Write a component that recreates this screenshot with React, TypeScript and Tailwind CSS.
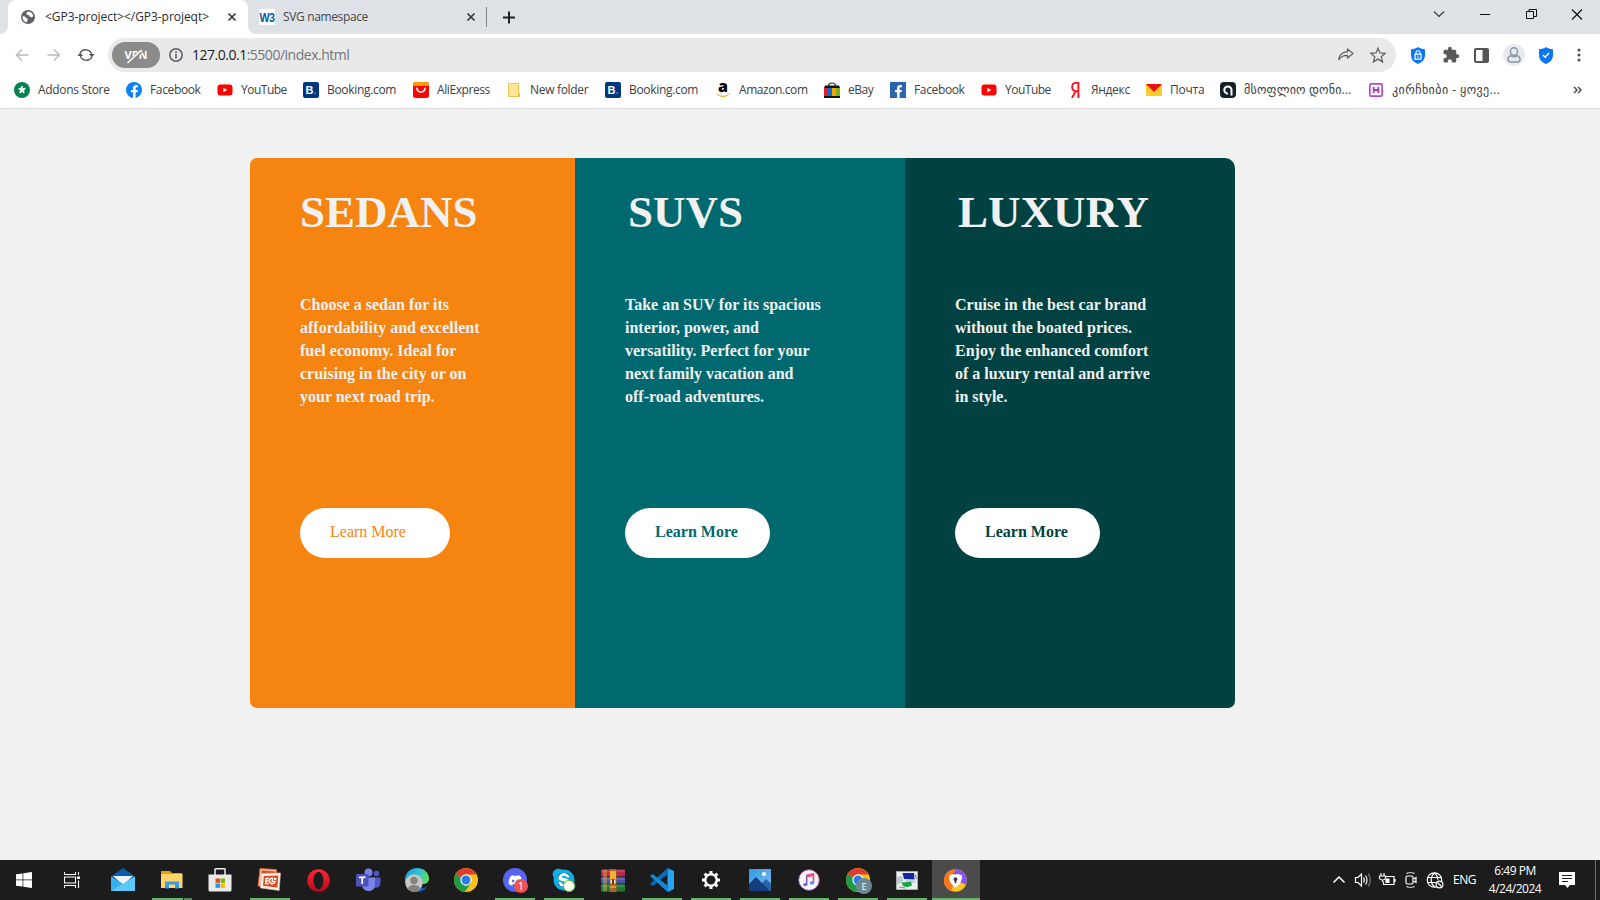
import type { ReactNode } from "react";
import { FaAmazon, FaDiscord, FaFacebookF, FaSkype } from "react-icons/fa";
import { MdExtension } from "react-icons/md";

/* ---------- Bookmark icons ---------- */

const AddonsIcon = () => (
  <svg width="16" height="16" viewBox="0 0 16 16">
    <circle cx="8" cy="8" r="8" fill="#04834f" />
    <path d="M6.800 4.300h2v1.900l2.400-.5.500 1.600-2.200.9 1.400 2.100-1.500 1.100L8 9.600l-1.500 1.800L5 10.300l1.500-2.100-2.200-.9.500-1.600 2 .5z" fill="#fff" />
  </svg>
);

const FacebookRound = () => (
  <span className="flex h-4 w-4 items-end justify-center overflow-hidden rounded-full bg-[#0c80f5] text-white">
    <FaFacebookF size={13} />
  </span>
);

const FacebookSquare = () => (
  <span className="flex h-4 w-4 items-end justify-end overflow-hidden bg-[#2d64b0] pr-px text-white">
    <FaFacebookF size={13} />
  </span>
);

const YouTubeIcon = () => (
  <svg width="16" height="16" viewBox="0 0 16 16">
    <rect x="0.500" y="2.500" width="15" height="11" rx="3" fill="#f00" />
    <path d="M6.300 5.700v4.600l4-2.300z" fill="#fff" />
  </svg>
);

const BookingIcon = () => (
  <span className="flex h-4 w-4 items-center justify-center rounded-[2px] bg-[#003580] font-['Liberation_Sans'] text-[11px] leading-none font-bold text-white">
    B<span className="text-[#009fe3]">.</span>
  </span>
);

const AliIcon = () => (
  <svg width="16" height="16" viewBox="0 0 16 16">
    <rect width="16" height="16" rx="2.500" fill="#f90505" />
    <path d="M0 4V2.500A2.500 2.500 0 0 1 2.500 0h11A2.500 2.500 0 0 1 16 2.500V4z" fill="#ff9d00" />
    <path d="M3.800 6.200c.6 5 7.800 5 8.400 0" fill="none" stroke="#fff" strokeWidth="1.500" strokeLinecap="round" />
  </svg>
);

const FolderNote = () => (
  <svg width="16" height="16" viewBox="0 0 16 16">
    <path d="M2.500 1.500h10v9.500h1v3.500h-11z" fill="#ffe598" stroke="#f0c14b" />
    <path d="M12.500 10.500v3.500" stroke="#f0c14b" />
  </svg>
);

const AmazonIcon = () => (
  <span className="relative flex h-4 w-4 justify-center">
    <FaAmazon size={16} color="#f7a11b" />
    <span className="absolute -top-[3px] flex h-[14px] w-4 items-center justify-center bg-white pb-px font-['Open_Sans'] text-[16px] leading-none font-extrabold text-black">
      a
    </span>
  </span>
);

const EbayIcon = () => (
  <svg width="16" height="16" viewBox="0 0 16 16">
    <path d="M4.500 6V4c0-4 7-4 7 0v2" fill="none" stroke="#222" strokeWidth="1.200" />
    <path d="M1 3.500h14l1 2.500H0z" fill="#111" />
    <path d="M0 6h4v8H0z" fill="#e02020" />
    <path d="M4 6h4v8H4z" fill="#0f6ad0" />
    <path d="M8 6h4v8H8z" fill="#f5a800" />
    <path d="M12 6h4v8h-4z" fill="#7db320" />
    <path d="M0 14h16v2H0z" fill="#111" />
  </svg>
);

const YandexIcon = () => (
  <svg width="16" height="16" viewBox="0 0 16 16" fill="none" stroke="#f5141c" strokeWidth="1.900">
    <path d="M11.400 16V.9H9.200C6.600.9 5.200 2.600 5.200 5s1.400 4.200 4 4.200h2.200M8.600 9.200 5 16" />
  </svg>
);

const MailRuIcon = () => (
  <svg width="16" height="16" viewBox="0 0 16 16">
    <path d="M0 2h16v12H0z" fill="#ffcc2b" />
    <path d="M0 2h16L8 10z" fill="#f30c0c" />
  </svg>
);

const DarkQIcon = () => (
  <svg width="16" height="16" viewBox="0 0 16 16">
    <rect width="16" height="16" rx="4" fill="#16222b" />
    <path d="M11.500 13.500V8A3.600 3.600 0 1 0 8 11.600" fill="none" stroke="#fff" strokeWidth="2" />
  </svg>
);

const HIcon = () => (
  <svg width="16" height="16" viewBox="0 0 16 16">
    <rect x="1.800" y="1.800" width="12.400" height="12.400" rx="1.500" fill="#fff" stroke="#b04acb" strokeWidth="1.700" />
    <path d="M5.700 5v6M10.300 5v6M5.700 8h4.600" stroke="#a63bc4" strokeWidth="1.900" />
  </svg>
);

type Bookmark = { icon: ReactNode; label: string; box: string; text: string };

const bookmarks: Bookmark[] = [
  { icon: <AddonsIcon />, label: "Addons Store", box: "w-[112px]", text: "tracking-[-0.32px]" },
  { icon: <FacebookRound />, label: "Facebook", box: "w-[91px]", text: "tracking-[-0.36px]" },
  { icon: <YouTubeIcon />, label: "YouTube", box: "w-[86px]", text: "tracking-[-0.5px]" },
  { icon: <BookingIcon />, label: "Booking.com", box: "w-[110px]", text: "tracking-[-0.32px]" },
  { icon: <AliIcon />, label: "AliExpress", box: "w-[93px]", text: "tracking-[-0.42px]" },
  { icon: <FolderNote />, label: "New folder", box: "w-[99px]", text: "tracking-[-0.32px]" },
  { icon: <BookingIcon />, label: "Booking.com", box: "w-[110px]", text: "tracking-[-0.32px]" },
  { icon: <AmazonIcon />, label: "Amazon.com", box: "w-[109px]", text: "tracking-[-0.42px]" },
  { icon: <EbayIcon />, label: "eBay", box: "w-[66px]", text: "tracking-[-0.45px]" },
  { icon: <FacebookSquare />, label: "Facebook", box: "w-[91px]", text: "tracking-[-0.36px]" },
  { icon: <YouTubeIcon />, label: "YouTube", box: "w-[86px]", text: "tracking-[-0.5px]" },
  { icon: <YandexIcon />, label: "Яндекс", box: "w-[79px]", text: "tracking-[-0.32px]" },
  { icon: <MailRuIcon />, label: "Почта", box: "w-[74px]", text: "tracking-[-0.24px]" },
  { icon: <DarkQIcon />, label: "მსოფლიო დონი...", box: "w-[148px]", text: "tracking-[0.2px]" },
  { icon: <HIcon />, label: "კირჩხიბი - ყოვე...", box: "w-[132px]", text: "tracking-[0.44px]" },
];

/* ---------- Browser chrome ---------- */

const CloseX = () => (
  <svg width="10" height="10" viewBox="0 0 10 10" stroke="#35383c" strokeWidth="1.700">
    <path d="M1.500 1.500l7 7M8.500 1.500l-7 7" />
  </svg>
);

function TabStrip() {
  return (
    <div className="flex h-[34px] bg-[#dee1e6]">
      <div className="flex w-2 items-end bg-white">
        <div className="h-full w-2 rounded-br-lg bg-[#dee1e6]" />
      </div>
      <div className="bg-[#dee1e6]">
        <div className="flex h-[34px] w-60 items-center rounded-t-lg bg-white pl-[13px]">
          <svg width="14" height="14" viewBox="0 0 14 14">
            <circle cx="7" cy="7" r="7" fill="#5f6368" />
            <path d="M1.600 6.200c2.500 0 3 .6 3.400 1.600s1.800.4 1.800 1.600-.9 1.500-.8 2.900C3 12 1.200 9 1.600 6.200zM5.500 3c.3-1.300 2-1.500 3.200-1.200 2 .8 3.400 2.400 3.700 4.400-.9.500-1.700 1.400-3 .8-1.300-.6-.4-1.500-1.700-1.800C6 5 5.200 4.400 5.500 3z" fill="#fff" />
          </svg>
          <span className="ml-[10px] w-[182px] text-[12px] tracking-[-0.05px] text-[#2a2c2f]">&lt;GP3-project&gt;&lt;/GP3-projeqt&gt;</span>
          <CloseX />
        </div>
      </div>
      <div className="flex w-2 items-end bg-white">
        <div className="h-full w-2 rounded-bl-lg bg-[#dee1e6]" />
      </div>
      <div className="flex items-center pl-[3px]">
        <span className="flex h-4 w-4 items-center justify-center bg-white">
          <span className="scale-x-[0.82] font-['Liberation_Sans'] text-[13px] leading-none font-bold tracking-[-0.8px] text-[#005a9c]">W3</span>
        </span>
        <span className="ml-2 w-[183px] text-[12px] tracking-[-0.36px] text-[#45494d]">SVG namespace</span>
        <CloseX />
        <span className="ml-[10px] h-5 w-px bg-[#808387]" />
        <svg className="ml-4" width="13" height="13" viewBox="0 0 13 13" stroke="#222" strokeWidth="2">
          <path d="M6 .5v12M0 6.500h12" />
        </svg>
      </div>
      <svg className="mr-[15px] ml-auto self-start" width="154" height="28" viewBox="0 0 154 28" fill="none" stroke="#111" strokeWidth="1">
        <path d="M3 11.500l5 5 5-5" stroke="#333" strokeWidth="1.100" />
        <path d="M49 14.500h10" />
        <path d="M95.500 11.500h7v7h-7zM98 11V9.500h7.500v7H103" />
        <path d="M141 9.500l10 10M151 9.500l-10 10" strokeWidth="1.200" />
      </svg>
    </div>
  );
}

const Shield = ({ children }: { children: ReactNode }) => (
  <svg width="14" height="17" viewBox="0 0 14 17">
    <path d="M7 0c2 1.500 4 2 7 2.200V8c0 4.500-3 7.500-7 9-4-1.500-7-4.500-7-9V2.200C3 2 5 1.500 7 0z" fill="#0a78f5" />
    {children}
  </svg>
);

function Toolbar() {
  return (
    <div className="flex h-[38px] items-center bg-white pt-1 pl-[15px]">
      <svg width="80" height="16" viewBox="0 0 80 16" fill="none" strokeWidth="1.400">
        <path d="M13.500 8H1.500M7 2.500L1.500 8 7 13.500" stroke="#b9babc" />
        <path d="M32.500 8h12M39 2.500L44.500 8 39 13.500" stroke="#b9babc" />
        <g stroke="#55585c" strokeWidth="1.400">
          <path d="M65 6.500a6.200 6.200 0 0 1 11.800 1.500M77 9.500A6.200 6.200 0 0 1 65.200 8" />
        </g>
        <path d="M73.900 7h5.800l-2.900 3.200zM62.300 9h5.800l-2.900-3.200z" fill="#55585c" />
      </svg>
      <div className="ml-[13px] flex h-[34px] w-[1288px] items-center rounded-full bg-[#e9e9e9] pl-1">
        <span className="relative flex h-[26px] w-12 items-center justify-center rounded-full bg-[#8b8b8b] pt-px font-['Open_Sans'] text-[11px] font-bold text-white">
          VPN
          <svg className="absolute" width="24" height="16" viewBox="0 0 24 16">
            <path d="M5.500 14L17 3.500" stroke="#8b8b8b" strokeWidth="3.600" />
            <path d="M3.500 15L17.500 2" stroke="#fff" strokeWidth="1.600" />
          </svg>
        </span>
        <svg className="ml-[9px]" width="14" height="14" viewBox="0 0 14 14">
          <circle cx="7" cy="7" r="6.200" fill="none" stroke="#5a5d61" strokeWidth="1.500" />
          <path d="M7 6v4.500M7 3.300v1.600" stroke="#5a5d61" strokeWidth="1.600" />
        </svg>
        <span className="ml-[9px] pb-px text-[14px] tracking-[-0.49px] text-[#70757a]">
          <span className="text-[#202124]">127.0.0.1</span>:5500/index.html
        </span>
        <svg className="mr-[10px] ml-auto" width="50" height="18" viewBox="0 0 50 18" fill="none" stroke="#5f6368" strokeWidth="1.300">
          <path d="M11.500 3L17 7.500 11.500 12V9.300C7 9.100 4.500 11 2.700 13.700 3.300 9 6.500 6 11.500 5.700z" strokeLinejoin="round" />
          <path d="M42 2.200l2 4.800 5.200.4-4 3.400 1.300 5.100-4.500-2.800-4.500 2.800 1.300-5.100-4-3.400 5.200-.4z" />
        </svg>
      </div>
      <div className="flex flex-1 items-center pl-[15px]">
        <Shield>
          <path d="M5 7.500V5.800c0-2.700 4-2.700 4 0v1.700" fill="none" stroke="#fff" strokeWidth="1.100" />
          <path d="M4 7.200h6v5H4z" fill="none" stroke="#fff" strokeWidth="1.200" />
          <path d="M7 8.500v2.300" stroke="#fff" />
        </Shield>
        <MdExtension className="ml-[17px]" size={18} color="#5a5a5a" />
        <svg className="ml-[14px]" width="15" height="15" viewBox="0 0 15 15">
          <rect x="1" y="1" width="13" height="13" rx="1" fill="#fff" stroke="#555" strokeWidth="2" />
          <path d="M8.500 1H14v13H8.500z" fill="#555" />
        </svg>
        <span className="ml-[14px] flex h-[22px] w-[22px] items-center justify-center rounded-full bg-[#e8eaed]">
          <svg width="14" height="16" viewBox="0 0 14 16" fill="none" stroke="#8798a5" strokeWidth="1.500">
            <ellipse cx="7" cy="4.600" rx="3.600" ry="3.800" />
            <path d="M3.500 8.600C0 10 .2 15 3.500 15h7c3.300 0 3.500-5 0-6.400-2 1.300-5 1.300-7 0z" />
          </svg>
        </span>
        <span className="ml-[14px]">
          <Shield>
            <path d="M4 8l2.200 2.200L10 6" fill="none" stroke="#fff" strokeWidth="1.500" />
          </Shield>
        </span>
        <svg className="ml-6" width="4" height="14" viewBox="0 0 4 14" fill="#4a4d50">
          <circle cx="2" cy="2" r="1.500" />
          <circle cx="2" cy="7" r="1.500" />
          <circle cx="2" cy="12" r="1.500" />
        </svg>
      </div>
    </div>
  );
}

function BookmarkBar() {
  return (
    <div className="flex h-[37px] items-center border-b border-[#d8d9db] bg-white pl-[14px] text-[12px] text-[#3c4043]">
      {bookmarks.map((b, i) => (
        <div key={i} className={`flex shrink-0 items-center gap-2 whitespace-nowrap ${b.box}`}>
          <span className="flex h-4 w-4 shrink-0">{b.icon}</span>
          <span className={b.text}>{b.label}</span>
        </div>
      ))}
      <svg className="ml-[73px]" width="9" height="8" viewBox="0 0 9 8" fill="none" stroke="#444" strokeWidth="1.400">
        <path d="M1 1l3 3-3 3M5 1l3 3-3 3" />
      </svg>
    </div>
  );
}

/* ---------- Page ---------- */

type Card = { title: string; lines: string[]; box: string; head: string; button: string };

const cards: Card[] = [
  {
    title: "SEDANS",
    lines: ["Choose a sedan for its", "affordability and excellent", "fuel economy. Ideal for", "cruising in the city or on", "your next road trip."],
    box: "w-[325px] bg-[#f58411] rounded-l-[7px]",
    head: "",
    button: "w-[150px] text-[#f58411]",
  },
  {
    title: "SUVS",
    lines: ["Take an SUV for its spacious", "interior, power, and", "versatility. Perfect for your", "next family vacation and", "off-road adventures."],
    box: "w-[330px] bg-[#006970]",
    head: "pl-[3px]",
    button: "w-[145px] font-bold text-[#006970]",
  },
  {
    title: "LUXURY",
    lines: ["Cruise in the best car brand", "without the boated prices.", "Enjoy the enhanced comfort", "of a luxury rental and arrive", "in style."],
    box: "w-[330px] bg-[#004241] rounded-tr-[10px] rounded-br-[7px]",
    head: "pl-[3px]",
    button: "w-[145px] font-bold text-[#004241]",
  },
];

function Page() {
  return (
    <main className="flex flex-1 items-start bg-[#f1f1f1] pt-[49px] pl-[250px] font-['Liberation_Serif',serif]">
      {cards.map((c) => (
        <section key={c.title} className={`flex h-[550px] flex-col items-start pt-7 pl-[50px] text-[#f1f1f1] ${c.box}`}>
          <h1 className={`h-[52px] text-[45px] leading-[52px] font-bold ${c.head}`}>{c.title}</h1>
          <p className="mt-[55px] text-[16px] leading-[23px] font-bold whitespace-nowrap">
            {c.lines.map((l) => (
              <span key={l} className="block">
                {l}
              </span>
            ))}
          </p>
          <button className={`mt-[100px] flex h-[50px] items-center rounded-full bg-white pb-[2px] pl-[30px] text-[16px] ${c.button}`}>
            Learn More
          </button>
        </section>
      ))}
    </main>
  );
}

/* ---------- Taskbar icons ---------- */

const MailApp = () => (
  <svg width="24" height="24" viewBox="0 0 24 24">
    <path d="M0 8.500L12 0l12 8.500V14H0z" fill="#0a5ea8" />
    <path d="M2 8h20l-9 8h-2z" fill="#f0f4f8" />
    <path d="M0 8.500l12 7.500L24 8.500V23H0z" fill="#33b2ef" />
    <path d="M24 8.500V23H0z" fill="#5cc9f7" />
  </svg>
);

const ExplorerApp = () => (
  <svg width="22" height="20" viewBox="0 0 22 20">
    <path d="M0 1h9l2 2h10v5H0z" fill="#e0a010" />
    <path d="M0 4h21.500v14H0z" fill="#fdd36a" />
    <path d="M4 18.500v-7h14v7h-4v-4H8v4z" fill="#3c9bdc" />
  </svg>
);

const StoreApp = () => (
  <svg className="mr-[2px]" width="24" height="24" viewBox="0 0 24 24">
    <path d="M7 8V1.500q0-.7.700-.7h8.600q.700 0 .700.700V8" fill="none" stroke="#eee" strokeWidth="1.500" />
    <path d="M.5 6.500h23V22a1.500 1.500 0 0 1-1.500 1.500H2A1.500 1.500 0 0 1 .5 22z" fill="#ebebeb" />
    <path d="M7.500 10.500H12v4.300H7.500z" fill="#e84a1f" />
    <path d="M12.700 10.500H17v4.300h-4.300z" fill="#7cb800" />
    <path d="M7.500 15.500H12v4.300H7.500z" fill="#1a9fe8" />
    <path d="M12.700 15.500H17v4.300h-4.300z" fill="#fdb900" />
  </svg>
);

const PowerPointApp = () => (
  <svg className="mr-[2px]" width="24" height="24" viewBox="0 0 24 24">
    <path d="M3 .500l16.500 1L20 6l-1 14-18-2z" fill="#f6c4a8" stroke="#d2552e" />
    <path d="M4.500 2.500l14 1v3h-14z" fill="#dd4d25" />
    <path d="M4.500 5.500L23.500 5l-1.300 17.500L3.500 20z" fill="#fff3ec" stroke="#f2b495" strokeWidth=".6" />
    <path d="M6.800 8l14.500-.500-1 12L6 17.800z" fill="#dc4a1e" />
    <path d="M12 10.500H9l-.4 5h3M8.900 13h2.600" fill="none" stroke="#fff" strokeWidth="1.300" />
    <path d="M15.500 10.200a2.800 2.800 0 1 0 2.500 3.500h-2.700z" fill="none" stroke="#fff" strokeWidth="1.300" />
    <path d="M17 9.700l2.400.2-.3 2.300H17z" fill="#fff" />
  </svg>
);

const OperaApp = () => (
  <svg className="mr-[2px]" width="23" height="23" viewBox="0 0 23 23">
    <defs>
      <linearGradient id="opera" x1="0" y1="0" x2="0" y2="1">
        <stop offset="0" stopColor="#ff2638" />
        <stop offset="1" stopColor="#b50a1d" />
      </linearGradient>
    </defs>
    <ellipse cx="11.500" cy="11.500" rx="11.300" ry="11.300" fill="url(#opera)" />
    <ellipse cx="11.500" cy="11.500" rx="4.900" ry="8.800" fill="#1c1c1c" />
  </svg>
);

const TeamsApp = () => (
  <svg width="26" height="24" viewBox="0 0 26 24">
    <circle cx="13.500" cy="4.500" r="4" fill="#7b83eb" />
    <circle cx="21.500" cy="5.500" r="2.800" fill="#5059c9" />
    <path d="M17 9.500h8.500V15c0 4-3 5.500-6 4.500z" fill="#5059c9" />
    <path d="M7 9.500h13V17c0 8-12.500 8-13 0z" fill="#7b83eb" />
    <rect x="1" y="6" width="12.500" height="12.500" rx="1" fill="#4b53bc" />
    <path d="M4 9.300h6.500M7.250 9.300v6.700" stroke="#fff" strokeWidth="1.700" />
  </svg>
);

const EdgeApp = () => (
  <svg width="24" height="24" viewBox="0 0 24 24">
    <defs>
      <linearGradient id="edge" x1="0" y1="0" x2="1" y2="0.300">
        <stop offset="0" stopColor="#1a9be0" />
        <stop offset="0.600" stopColor="#2ec4cf" />
        <stop offset="1" stopColor="#62dd5c" />
      </linearGradient>
    </defs>
    <path d="M0 12C0 5 5 0 12 0s12 5 12 10.500c0 4-3.500 6-7 5.500L12 22C5 24 0 18 0 12z" fill="url(#edge)" />
    <path d="M14 20c3 .5 6 0 8-2-1.500 4-6 6.500-11 5.800z" fill="#1260b0" />
    <circle cx="9" cy="15" r="8.700" fill="#c9c7c5" />
    <circle cx="9" cy="12.500" r="3.700" fill="#85807b" />
    <path d="M3 21c0-5.500 12-5.500 12 0-3 3.500-9 3.500-12 0z" fill="#85807b" />
  </svg>
);

const ChromeApp = () => (
  <svg width="24" height="24" viewBox="0 0 24 24">
    <circle cx="12" cy="12" r="12" fill="#fbc116" />
    <path d="M12 12L1.600 6A12 12 0 0 0 10.500 23.900L17.200 15z" fill="#1e9a48" />
    <path d="M12 12L1.600 6A12 12 0 0 1 22.400 6.500H12z" fill="#e03c31" />
    <circle cx="12" cy="12" r="5.700" fill="#fff" />
    <circle cx="12" cy="12" r="4.500" fill="#2a7de9" />
  </svg>
);

const DiscordApp = () => (
  <span className="relative flex h-6 w-6 items-center justify-center rounded-full bg-[#5865f2] text-white">
    <FaDiscord size={15} />
    <span className="absolute top-[10.500px] left-[11px] flex h-[14px] w-[14px] items-center justify-center rounded-full bg-[#ed5353] text-[11px] leading-none">
      1
    </span>
  </span>
);

const SkypeApp = () => (
  <span className="relative flex h-6 w-6 items-center justify-center text-[#10aeea]">
    <span className="absolute h-[14px] w-3 rounded-full bg-white" />
    <FaSkype className="relative" size={26} />
    <span className="absolute top-[12px] left-[11px] h-[12px] w-[12px] rounded-full border-[1.5px] border-[#7fba00] bg-white" />
  </span>
);

const WinrarApp = () => (
  <svg width="24" height="23" viewBox="0 0 24 23">
    <rect y="0.500" width="24" height="7.500" rx="1" fill="#b52a4c" />
    <rect y="8" width="24" height="7" rx="1" fill="#4b4fa8" />
    <rect y="15" width="24" height="7.500" rx="1" fill="#1f7a36" />
    <path d="M0 2h24M0 10h24M0 17h24" stroke="#fff" strokeOpacity=".25" />
    <path d="M0 7.600h24M0 14.800h24" stroke="#1c1c1c" strokeOpacity=".7" />
    <path d="M3 .5v22M5 .5v22" stroke="#e0b040" strokeWidth=".9" />
    <path d="M8.500 0h7v23h-7z" fill="#a8642a" />
    <path d="M9 2h6v8H9z" fill="#f6b02c" />
    <path d="M9.500 10.500h5v4h-5z" fill="#f5efe5" />
    <path d="M12 10v5" stroke="#6b3310" strokeWidth="2" />
    <path d="M9 18h6" stroke="#e0b040" strokeWidth="1.500" />
  </svg>
);

const VscodeApp = () => (
  <svg width="24" height="24" viewBox="0 0 24 24">
    <path d="M17.500 0L24 3v18l-6.500 3z" fill="#2aa3f0" />
    <path d="M17.500 0v6.500L2.500 18 0 16z" fill="#0a6ab6" />
    <path d="M0 8l2.500-2 15 11.500V24z" fill="#1388d4" />
  </svg>
);

const SettingsApp = () => (
  <svg width="20" height="20" viewBox="0 0 20 20" fill="none" stroke="#fff">
    <circle cx="10" cy="10" r="5.700" strokeWidth="2.400" />
    <path d="M10 1v3M10 16v3M1 10h3M16 10h3M3.640 3.640l2.100 2.100M14.260 14.260l2.100 2.100M16.360 3.640l-2.100 2.100M5.740 14.260l-2.100 2.100" strokeWidth="2.900" />
  </svg>
);

const PhotosApp = () => (
  <svg width="22" height="22" viewBox="0 0 22 22">
    <defs>
      <linearGradient id="sky" x1="0" y1="0" x2="1" y2="1">
        <stop offset="0" stopColor="#2f9ae6" />
        <stop offset="1" stopColor="#7fbdf0" />
      </linearGradient>
    </defs>
    <path d="M0 0h22v22H0z" fill="url(#sky)" />
    <path d="M12 15l5-5 5 4.500V22h-8z" fill="#2b63ab" />
    <path d="M0 15l7-7 14 14H0z" fill="#153f7c" />
    <circle cx="15" cy="5" r="2" fill="#fff" />
  </svg>
);

const ItunesApp = () => (
  <svg width="22" height="22" viewBox="0 0 22 22">
    <defs>
      <linearGradient id="note" x1="1" y1="0" x2="0" y2="1">
        <stop offset="0" stopColor="#f5466c" />
        <stop offset="1" stopColor="#5b6cf0" />
      </linearGradient>
    </defs>
    <circle cx="11" cy="11" r="10.300" fill="#f7f3f8" stroke="url(#note)" strokeWidth=".8" />
    <path d="M8.700 15.500V6.400l6.800-1.600v8.900" fill="none" stroke="url(#note)" strokeWidth="1.600" />
    <path d="M8.700 7.600l6.800-1.600" stroke="#f2556f" strokeWidth="2" />
    <ellipse cx="7.200" cy="15.600" rx="2.100" ry="1.700" fill="#6c62ee" />
    <ellipse cx="14" cy="13.900" rx="2.100" ry="1.700" fill="#4c8bf5" />
  </svg>
);

const ChromeProfile = () => (
  <span className="relative flex h-6 w-6">
    <ChromeApp />
    <span className="absolute top-[10px] left-[10px] flex h-4 w-4 items-center justify-center rounded-full bg-[#6d8796] text-[9px] leading-none text-white">
      E
    </span>
  </span>
);

const DesktopApp = () => (
  <svg className="mr-px" width="22" height="19" viewBox="0 0 22 19">
    <path d="M.5.500h21v18H.5z" fill="#e9eef0" stroke="#a8acae" />
    <path d="M6.500 2h11.500l.5 6.500L8 8z" fill="#1526a3" />
    <path d="M1 6l5-1 1 5-6 4z" fill="#bfc8cc" />
    <path d="M9 9.500l8-.8 4 2.300-8 2z" fill="#c3ccd1" />
    <path d="M5.500 11.500l9.500-.8 1 3.800-5 1.700-4-1.200z" fill="#16a542" />
    <path d="M19 3l1.500 5M3 16l6 1" stroke="#888" />
  </svg>
);

const AvgApp = () => (
  <svg className="mr-px" width="23" height="23" viewBox="0 0 23 23">
    <circle cx="11.500" cy="11.500" r="11.300" fill="#f9c527" />
    <path d="M11.500 11.500L6 1.600A11.300 11.300 0 0 1 22 15.500z" fill="#8653f2" />
    <path d="M11.500 11.500L11 .2A11.300 11.300 0 0 0 7 22z" fill="#f9761d" />
    <path d="M8 5C11 2 17 1 20 7l-3 1z" fill="#8653f2" />
    <path d="M11.500 5.500c2.200-.5 4.600-.2 6.500 1.300 0 5.700-2.300 9-6.500 11.700C7.300 15.800 5 12.500 5 6.800c1.900-1.500 4.300-1.800 6.500-1.300z" fill="#fff" />
    <circle cx="11.500" cy="10.200" r="1.900" fill="#333c4e" />
    <path d="M11.500 10.200v4" stroke="#333c4e" strokeWidth="1.700" />
  </svg>
);

type TaskbarApp = { name: string; icon: ReactNode; bar?: "open" | "split" | "active" };

const apps: TaskbarApp[] = [
  { name: "mail", icon: <MailApp /> },
  { name: "explorer", icon: <ExplorerApp />, bar: "split" },
  { name: "store", icon: <StoreApp /> },
  { name: "powerpoint", icon: <PowerPointApp />, bar: "open" },
  { name: "opera", icon: <OperaApp /> },
  { name: "teams", icon: <TeamsApp /> },
  { name: "edge", icon: <EdgeApp /> },
  { name: "chrome", icon: <ChromeApp /> },
  { name: "discord", icon: <DiscordApp />, bar: "open" },
  { name: "skype", icon: <SkypeApp />, bar: "open" },
  { name: "winrar", icon: <WinrarApp /> },
  { name: "vscode", icon: <VscodeApp />, bar: "open" },
  { name: "settings", icon: <SettingsApp />, bar: "open" },
  { name: "photos", icon: <PhotosApp />, bar: "open" },
  { name: "itunes", icon: <ItunesApp />, bar: "open" },
  { name: "chrome-profile", icon: <ChromeProfile />, bar: "open" },
  { name: "desktop", icon: <DesktopApp />, bar: "open" },
  { name: "secure-browser", icon: <AvgApp />, bar: "active" },
];

function Taskbar() {
  return (
    <footer className="flex h-10 bg-[#1c1c1c] text-white">
      <div className="flex w-[99px] shrink-0 items-center">
        <svg className="ml-4" width="16" height="16" viewBox="0 0 16 16" fill="#fff">
          <path d="M0 2.300l6.600-.9v6.200H0zM7.300 1.300L16 0v7.600H7.300zM0 8.300h6.600v6.300L0 13.700zM7.300 8.300H16V16l-8.700-1.300z" />
        </svg>
        <svg className="ml-8" width="16" height="16" viewBox="0 0 16 16" fill="none" stroke="#fff" strokeWidth="1.100">
          <path d="M.5 0v2.500h11V0M.5 16v-2.500h11V16M.5 5h11v6H.5zM14.500 0v3M14.500 8.500V16" />
          <path d="M13 4.500h3v2.500h-3z" fill="#fff" stroke="none" />
        </svg>
      </div>
      <div className="flex gap-px">
        {apps.map((a) => (
          <div key={a.name} className={a.bar === "active" ? "flex w-12 flex-col items-center bg-[#4b4b4b]" : "flex w-12 flex-col items-center"}>
            <div className="flex h-[38px] items-center pt-[2px]">{a.icon}</div>
            {a.bar === "open" && <div className="h-[2px] w-10 bg-[#61b865]" />}
            {a.bar === "active" && <div className="h-[2px] w-12 bg-[#61b865]" />}
            {a.bar === "split" && (
              <div className="flex h-[2px] w-10">
                <div className="w-[31px] bg-[#61b865]" />
                <div className="ml-px w-2 bg-[#4c8a4f]" />
              </div>
            )}
          </div>
        ))}
      </div>
      <svg className="ml-auto" width="112" height="40" viewBox="0 0 112 40" fill="none" stroke="#fff" strokeWidth="1.200">
        <path d="M1.500 22.500L7 17l5.500 5.500" strokeWidth="1.500" />
        <path d="M23.500 17.500h2.500l3.500-3.500v12l-3.500-3.500h-2.500z" />
        <path d="M31.500 17.500c1 1.500 1 3.500 0 5M33.500 15.500c2 2.500 2 6.500 0 9" />
        <path d="M36 13.500c3 3.500 3 9.500 0 13" stroke="#777" />
        <path d="M53 16.500h9v8H51.500v-3M63 19v3M49 13v3M52 13v3M47.500 16h6v2.500c-1 2-5 2-6 0zM50.500 20v2" />
        <path d="M53.500 18.500h4v4.500h-4z" fill="#fff" stroke="none" />
        <rect x="74" y="16" width="7" height="8" rx="1.500" />
        <path d="M81.500 19l2.500-1.500v5L81.500 21M74.500 13.500c2-1 6-1 8 0M74.500 26.500c2 1 6 1 8 0" />
        <circle cx="102.500" cy="20" r="7.200" />
        <path d="M95.500 17.500h14M95.500 22.500h10M102.500 12.800c-4.500 4.500-4.500 10 0 14.400M102.500 12.800c2.500 2.500 3.500 5 3.300 7" />
        <circle cx="107.500" cy="24.500" r="3.400" fill="#1c1c1c" />
        <path d="M105.500 22.500l4 4" />
      </svg>
      <span className="ml-[9px] w-6 self-center text-[12px] tracking-[-0.500px]">ENG</span>
      <div className="ml-[8px] flex w-[60px] flex-col items-center pt-[2px] text-[12px] leading-[18px] tracking-[-0.5px]">
        <span>6:49 PM</span>
        <span>4/24/2024</span>
      </div>
      <svg className="ml-[14px] self-center" width="16" height="16" viewBox="0 0 16 16">
        <path d="M0 0h16v13h-5l-2.500 3L6 13H0z" fill="#fff" />
        <path d="M3 3.500h10M3 6.500h10M3 9.500h6" stroke="#1c1c1c" />
      </svg>
      <div className="mr-1 ml-5 w-px bg-[#6e6e6e]" />
    </footer>
  );
}

export default function App() {
  return (
    <div className="flex h-[900px] w-[1600px] flex-col overflow-hidden bg-white font-['Open_Sans','DejaVu_Sans',sans-serif]">
      <TabStrip />
      <Toolbar />
      <BookmarkBar />
      <Page />
      <Taskbar />
    </div>
  );
}
